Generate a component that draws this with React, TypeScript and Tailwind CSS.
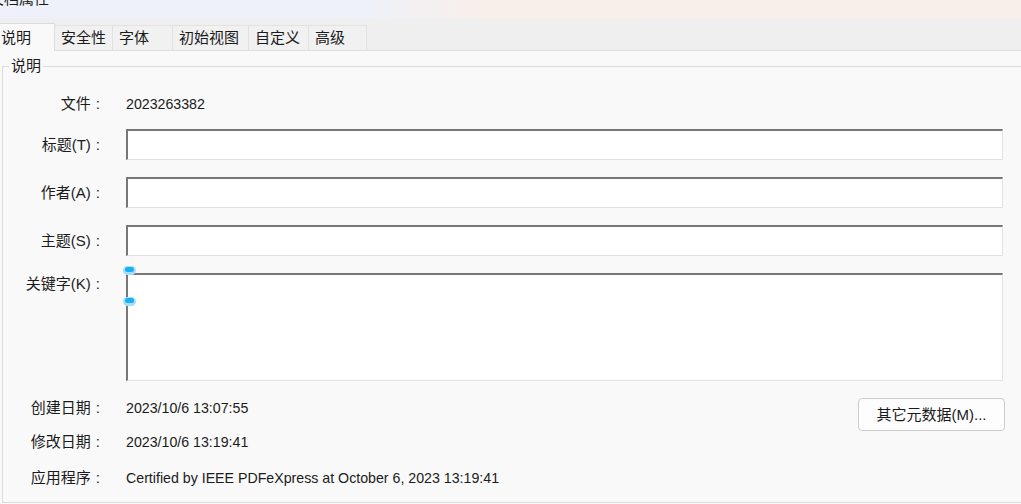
const font = {
  fontFamily: '"Liberation Sans", "Noto Sans CJK SC", sans-serif',
};

const tabs = [
  { label: '安全性', w: 'w-[58px]' },
  { label: '字体', w: 'w-[60px]' },
  { label: '初始视图', w: 'w-[76px]' },
  { label: '自定义', w: 'w-[60px]' },
  { label: '高级', w: 'w-[58px]' },
];

function Label({ text, className = '' }: { text: string; className?: string }) {
  return (
    <div className={`w-[97px] text-right text-[15px] ${className}`}>
      {text}
      <span className="ml-[5px]">:</span>
    </div>
  );
}

function Field({ label }: { label: string }) {
  return (
    <div className="flex h-[31px] items-center">
      <Label text={label} />
      <div className="ml-[26px] h-[31px] w-[877px] border-t-2 border-l-2 border-r border-b border-t-[#777777] border-l-[#777777] border-r-[#e2e2e2] border-b-[#e2e2e2] bg-white" />
    </div>
  );
}

function Handle({ className }: { className: string }) {
  return (
    <span className={`absolute flex h-[9px] w-[13px] items-start justify-center rounded-full bg-[#a6def9] ${className}`}>
      <span className="mt-[1px] h-[5px] w-[9px] rounded-full bg-[#17b0f2]" />
    </span>
  );
}

export default function App() {
  return (
    <div
      className="h-[504px] w-[1021px] overflow-hidden bg-[#f9f9f9] text-[14.2px] leading-[20px] text-[#1b1b1b]"
      style={font}
    >
      {/* title bar */}
      <div className="h-[19px] overflow-hidden bg-[linear-gradient(90deg,#eef1f9_0%,#eef1f9_36%,#f9efe9_48%,#f9efea_100%)]">
        <div className="-mt-[9px] -ml-[11px] text-[15px] leading-none text-[#1b1b1b]">文档属性</div>
      </div>

      {/* tabs */}
      <div className="flex h-[32px] items-end border-b border-[#dcdcdc] bg-[#efefef]">
        <div className="-mb-px flex h-[28px] w-[55px] items-start border-t border-r border-[#dcdcdc] bg-[#f9f9f9] pt-[4px] pl-[1px] text-[15px]">
          说明
        </div>
        {tabs.map((t) => (
          <div
            key={t.label}
            className={`flex h-[25px] ${t.w} items-center border-t border-r border-[#e2e2e2] bg-[#f1f1f1] pl-[6px] text-[15px]`}
          >
            {t.label}
          </div>
        ))}
      </div>

      {/* group box */}
      <div className="relative mt-[15px] ml-[2px] h-[437px] w-[1030px] border border-[#dcdcdc] pt-[27px]">
        <span className="absolute -top-[11px] left-[6px] bg-[#f9f9f9] px-[2px] text-[15px]">说明</span>

        <div className="flex h-[20px] items-center">
          <Label text="文件" />
          <div className="ml-[26px]">2023263382</div>
        </div>

        <div className="mt-[15px] flex flex-col gap-[17px]">
          <Field label="标题(T)" />
          <Field label="作者(A)" />
          <Field label="主题(S)" />
          <div className="relative flex items-start">
            <Label text="关键字(K)" className="mt-[1px]" />
            <div className="ml-[26px] h-[108px] w-[877px] border-t-2 border-l-2 border-r border-b border-t-[#777777] border-l-[#777777] border-r-[#e2e2e2] border-b-[#e2e2e2] bg-white" />
            <Handle className="top-[-7px] left-[120px]" />
            <Handle className="top-[24px] left-[120px]" />
          </div>

          <div className="flex h-[33px] items-start">
            <Label text="创建日期" />
            <div className="ml-[26px] flex-1">2023/10/6 13:07:55</div>
            <button
              type="button"
              className="mr-[26px] h-[33px] w-[147px] rounded-[4px] border border-[#cccccc] bg-[#fdfdfd] text-[15px]"
            >
              其它元数据(M)...
            </button>
          </div>
        </div>

        <div className="mt-[1px] flex h-[20px] items-center">
          <Label text="修改日期" />
          <div className="ml-[26px]">2023/10/6 13:19:41</div>
        </div>
        <div className="mt-[16px] flex h-[20px] items-center">
          <Label text="应用程序" />
          <div className="ml-[26px]">Certified by IEEE PDFeXpress at October 6, 2023 13:19:41</div>
        </div>
      </div>
    </div>
  );
}
